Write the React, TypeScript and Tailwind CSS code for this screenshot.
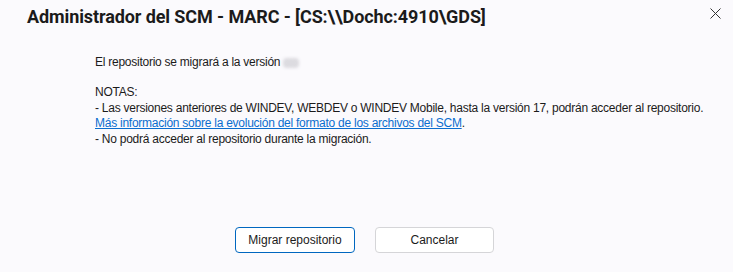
export default function App() {
  return (
    <div className="relative flex h-[272px] w-[733px] flex-col bg-[#fbfafd] text-[#1b1b1b] [font-family:'Liberation_Sans',Arial,sans-serif]">
      <header className="flex h-[34px] items-center pl-[27px]">
        <h1 className="text-[18px] font-bold leading-none tracking-[-0.1px] [font-family:Roboto,sans-serif]">
          Administrador del SCM - MARC - [CS:\\Dochc:4910\GDS]
        </h1>
      </header>
      <button className="absolute right-[12px] top-[7px] grid h-[12px] w-[12px] place-items-center text-[#333]" aria-label="Cerrar">
        <svg width="11" height="11" viewBox="0 0 11 11" fill="none" stroke="currentColor" strokeWidth="1">
          <path d="M0.5 0.5L10.5 10.5M10.5 0.5L0.5 10.5" />
        </svg>
      </button>

      <main className="pl-[95px] pt-[21px] text-[12px] leading-[15px] tracking-[-0.25px]">
        <p className="flex items-center">
          El repositorio se migrará a la versión
          <span className="ml-[3px] inline-block h-[10px] w-[16px] rounded-sm bg-[#dcdbe0] blur-[1.5px]" />
        </p>
        <div className="mt-[15px] leading-[15.5px]">
          <p>NOTAS:</p>
          <p>- Las versiones anteriores de WINDEV, WEBDEV o WINDEV Mobile, hasta la versión 17, podrán acceder al repositorio.</p>
          <p>
            <a href="#" className="text-[#0b6ecf] underline">
              Más información sobre la evolución del formato de los archivos del SCM
            </a>
            .
          </p>
          <p>- No podrá acceder al repositorio durante la migración.</p>
        </div>
      </main>

      <footer className="mt-auto mb-[19px] flex justify-center gap-[20px] pr-[4px]">
        <button className="h-[26px] w-[120px] rounded-[4px] border border-[#0067c0] bg-white text-[12px] text-[#1b1b1b]">
          Migrar repositorio
        </button>
        <button className="h-[26px] w-[119px] rounded-[4px] border border-[#d5d5d8] bg-white text-[12px] text-[#1b1b1b]">
          Cancelar
        </button>
      </footer>
    </div>
  );
}
